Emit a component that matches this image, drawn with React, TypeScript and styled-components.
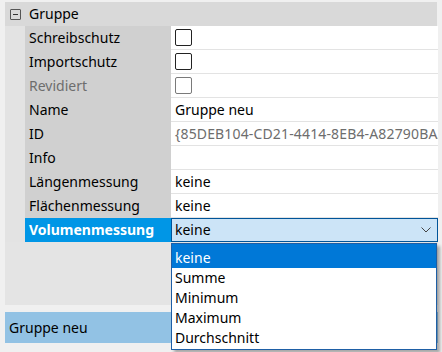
import React from 'react';
import styled, { createGlobalStyle } from 'styled-components';

const GlobalStyle = createGlobalStyle`
  html, body {
    margin: 0;
    padding: 0;
    background: #f0f0f0;
  }
  body {
    font-family: 'Noto Sans', 'Open Sans', sans-serif;
    font-size: 14px;
    color: #000;
  }
`;

type Row = {
  label: string;
  value?: string;
  kind?: 'text' | 'check' | 'combo';
  disabled?: boolean;
  grayValue?: boolean;
};

const rows: Row[] = [
  { label: 'Schreibschutz', kind: 'check' },
  { label: 'Importschutz', kind: 'check' },
  { label: 'Revidiert', kind: 'check', disabled: true },
  { label: 'Name', value: 'Gruppe neu' },
  { label: 'ID', value: '{85DEB104-CD21-4414-8EB4-A82790BA3F1C}', grayValue: true, disabled: true },
  { label: 'Info', value: '' },
  { label: 'Längenmessung', value: 'keine' },
  { label: 'Flächenmessung', value: 'keine' },
  { label: 'Volumenmessung', value: 'keine', kind: 'combo' },
];

const options = ['keine', 'Summe', 'Minimum', 'Maximum', 'Durchschnitt'];

const App = () => {
  return (
    <Page>
      <GlobalStyle />
      <Grid>
        <CategoryRow>
          <Toggle />
          <CategoryTitle>Gruppe</CategoryTitle>
        </CategoryRow>
        {rows.map((r) => (
          <PropRow key={r.label}>
            <Indent />
            <Label disabled={r.disabled && !r.grayValue} selected={r.kind === 'combo'}>
              {r.label}
            </Label>
            {r.kind === 'check' && (
              <Value>
                <Check disabled={r.disabled} />
              </Value>
            )}
            {r.kind === 'combo' && (
              <Combo>
                <span>{r.value}</span>
                <svg width="10" height="6" viewBox="0 0 10 6">
                  <path d="M0.5 0.5 L5 5 L9.5 0.5" fill="none" stroke="#444" strokeWidth="1" />
                </svg>
                <DropList>
                  {options.map((o, i) => (
                    <Option key={o} active={i === 0}>
                      {o}
                    </Option>
                  ))}
                </DropList>
              </Combo>
            )}
            {(r.kind === undefined || r.kind === 'text') && (
              <Value gray={r.grayValue}>{r.value}</Value>
            )}
          </PropRow>
        ))}
        <Empty />
      </Grid>
      <Description>Gruppe neu</Description>
    </Page>
  );
};

const Page = styled.div`
  width: 442px;
  height: 352px;
  padding: 2px 4px 0 5px;
  box-sizing: border-box;
  display: flex;
  flex-direction: column;
  background: #f0f0f0;
  overflow: hidden;
`;

const Grid = styled.div`
  display: flex;
  flex-direction: column;
  position: relative;
`;

const CategoryRow = styled.div`
  height: 24px;
  background: #d9d9d9;
  display: flex;
  align-items: center;
  margin-right: 1px;
`;

const Toggle = styled.div`
  width: 9px;
  height: 9px;
  margin-left: 5px;
  margin-right: 8px;
  border: 1px solid #555;
  border-radius: 1px;
  position: relative;
  &::after {
    content: '';
    position: absolute;
    left: 2px;
    right: 2px;
    top: 4px;
    height: 1px;
    background: #333;
  }
`;

const CategoryTitle = styled.span`
  line-height: 24px;
`;

const PropRow = styled.div`
  height: 24px;
  display: grid;
  grid-template-columns: 20px 146px 1fr;
`;

const Indent = styled.div`
  background: #e3e3e3;
`;

const Label = styled.div<{ disabled?: boolean; selected?: boolean }>`
  background: ${(p) => (p.selected ? '#0096e6' : '#d0d0d0')};
  color: ${(p) => (p.selected ? '#fff' : p.disabled ? '#6d6d6d' : '#000')};
  font-weight: ${(p) => (p.selected ? 700 : 400)};
  padding-left: 4px;
  line-height: 24px;
  white-space: nowrap;
  overflow: hidden;
`;

const Value = styled.div<{ gray?: boolean }>`
  background: #fff;
  border-bottom: 1px solid #e3e3e3;
  box-sizing: border-box;
  padding-left: 4px;
  line-height: 23px;
  color: ${(p) => (p.gray ? '#6d6d6d' : '#000')};
  letter-spacing: ${(p) => (p.gray ? '0.15px' : 'normal')};
  white-space: nowrap;
  overflow: hidden;
  display: flex;
  align-items: center;
`;

const Check = styled.div<{ disabled?: boolean }>`
  width: 15px;
  height: 15px;
  border: 1px solid ${(p) => (p.disabled ? '#7a7a7a' : '#222')};
  border-radius: 2px;
  background: #fff;
`;

const Combo = styled.div`
  position: relative;
  background: #cce4f7;
  border: 1px solid #005499;
  box-sizing: border-box;
  padding: 0 6px 0 3px;
  display: flex;
  align-items: center;
  justify-content: space-between;
  span {
    line-height: 22px;
  }
`;

const DropList = styled.div`
  position: absolute;
  left: -1px;
  right: 0px;
  top: 24px;
  background: #fff;
  border: 1px solid #1e5fa6;
  box-shadow: 3px 3px 3px rgba(0, 0, 0, 0.3);
  padding-bottom: 1px;
  z-index: 2;
`;

const Option = styled.div<{ active?: boolean }>`
  height: 20px;
  line-height: 20px;
  padding-left: 3px;
  color: ${(p) => (p.active ? '#fff' : '#000')};
  background: ${(p) => (p.active ? '#0078d7' : '#fff')};
  &:first-child {
    height: 24px;
    line-height: 28px;
  }
`;

const Empty = styled.div`
  height: 63px;
  background: #e4e4e4;
`;

const Description = styled.div`
  margin-top: 7px;
  height: 31px;
  background: #92c2e4;
  padding-left: 4px;
  line-height: 31px;
`;

export default App;
